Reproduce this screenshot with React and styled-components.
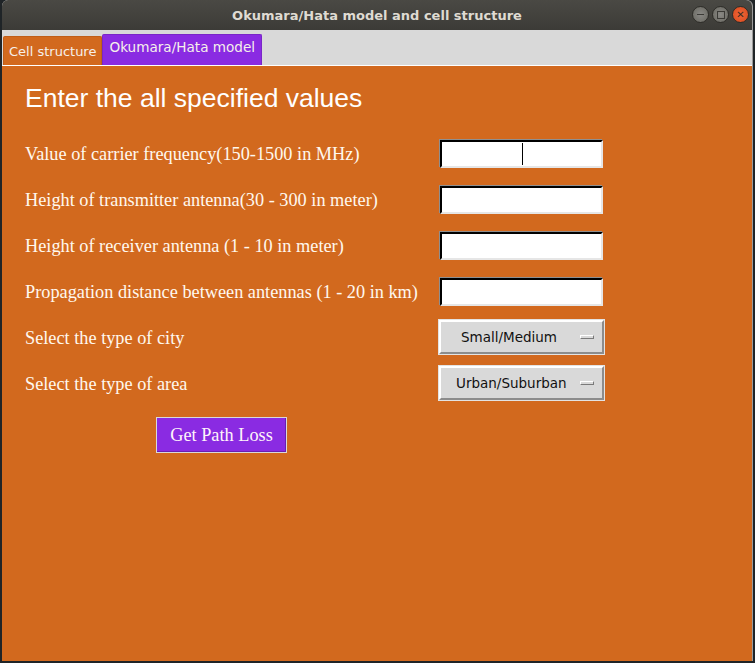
import React from "react";
import styled, { createGlobalStyle } from "styled-components";

const GlobalStyle = createGlobalStyle`
  html, body {
    margin: 0;
    padding: 0;
    background: #2b2b2b;
    overflow: hidden;
  }
`;

const Desktop = styled.div`
  width: 755px;
  height: 663px;
  background: #1f2427;
  display: flex;
  padding-left: 2px;
  box-sizing: border-box;
`;

const Window = styled.div`
  width: 750px;
  height: 661px;
  display: flex;
  flex-direction: column;
  background: #d9d9d9;
  border-radius: 6px 6px 0 0;
  overflow: hidden;
  box-shadow: 1px 0 0 #9a9a9a;
`;

const TitleBar = styled.div`
  height: 30px;
  flex-shrink: 0;
  background: linear-gradient(#4a4944, #3c3b37);
  display: flex;
  align-items: center;
  justify-content: center;
  position: relative;
  font-family: "DejaVu Sans", "Noto Sans", sans-serif;
  font-weight: bold;
  font-size: 13px;
  color: #dfdbd2;
`;

const Controls = styled.div`
  position: absolute;
  right: 3px;
  top: 6px;
  display: flex;
  gap: 3px;
`;

const Ctrl = styled.div`
  width: 17px;
  height: 17px;
  border-radius: 50%;
  background: ${(p) => (p.close ? "radial-gradient(#f0683a, #d9481c)" : "radial-gradient(#8a8985, #67665f)")};
  border: 1px solid #2e2d29;
  box-sizing: border-box;
  display: flex;
  align-items: center;
  justify-content: center;
  color: #3a2a20;
  font-family: "DejaVu Sans", sans-serif;
  font-size: 10px;
  line-height: 1;
`;

const Dash = styled.div`
  width: 7px;
  height: 1.5px;
  background: #3b3a36;
`;

const Square = styled.div`
  width: 6px;
  height: 6px;
  border: 1px solid #3b3a36;
`;

const TabBar = styled.div`
  height: 35px;
  flex-shrink: 0;
  display: flex;
  align-items: flex-end;
  padding-left: 1px;
  border-bottom: 1px solid #ffffff;
`;

const Tab = styled.div`
  height: ${(p) => (p.active ? "31px" : "29px")};
  padding: 0 ${(p) => (p.active ? "6px" : "5px")};
  background: ${(p) => (p.active ? "#8a2be2" : "#d2691e")};
  border: 1px solid ${(p) => (p.active ? "#7a26c8" : "#c05e18")};
  border-bottom: none;
  border-radius: 2px 2px 0 0;
  display: flex;
  align-items: ${(p) => (p.active ? "flex-start" : "center")};
  padding-top: ${(p) => (p.active ? "4px" : "0")};
  box-sizing: border-box;
  font-family: "DejaVu Sans", "Noto Sans", sans-serif;
  font-size: ${(p) => (p.active ? "13.6px" : "13px")};
  color: #f6f0ea;
  white-space: nowrap;
`;

const Panel = styled.div`
  flex: 1;
  background: #d2691e;
  padding: 17px 0 0 23px;
  display: flex;
  flex-direction: column;
`;

const Heading = styled.h1`
  margin: 0 0 27px 0;
  font-family: "Liberation Sans", Arial, sans-serif;
  font-weight: normal;
  font-size: 26.5px;
  color: #ffffff;
  line-height: 30px;
`;

const Rows = styled.div`
  display: flex;
  flex-direction: column;
  gap: 18px;
`;

const Row = styled.div`
  display: grid;
  grid-template-columns: 415px 165px;
  align-items: center;
  height: 28px;
`;

const Label = styled.div`
  font-family: "Liberation Serif", "Times New Roman", serif;
  font-size: 18.3px;
  color: #fff8ee;
`;

const Entry = styled.div`
  height: 28px;
  width: 163px;
  box-sizing: border-box;
  background: #ffffff;
  border-top: 2px solid #000;
  border-left: 2px solid #000;
  border-right: 2px solid #e6e6e6;
  border-bottom: 2px solid #e6e6e6;
  box-shadow: -1px -1px 0 #8f8f8f;
  position: relative;
`;

const Cursor = styled.div`
  position: absolute;
  left: 80px;
  top: 1px;
  bottom: 1px;
  width: 1px;
  background: #000;
`;

const Menu = styled.div`
  height: 34px;
  width: 165px;
  margin: -4px 0 -2px -1px;
  box-sizing: border-box;
  background: #d9d9d9;
  border: 2px solid;
  border-color: #ffffff #8c8c8c #8c8c8c #ffffff;
  box-shadow: 0 0 0 1px #e3e3e3;
  display: flex;
  align-items: center;
  justify-content: space-between;
  padding: 0 8px 0 ${(p) => p.indent}px;
  font-family: "DejaVu Sans", "Noto Sans", sans-serif;
  font-size: 13.5px;
  color: #111;
`;

const Indicator = styled.div`
  width: 14px;
  height: 4px;
  box-sizing: border-box;
  background: #d9d9d9;
  border: 1px solid;
  border-color: #ffffff #7a7a7a #7a7a7a #ffffff;
`;

const ButtonRow = styled.div`
  padding: 19px 0 0 131px;
`;

const Button = styled.button`
  width: 131px;
  height: 36px;
  background: #8a2be2;
  border: 1px solid #d9d9d9;
  box-shadow: inset -1px -1px 0 #6a1fb0;
  font-family: "Liberation Serif", "Times New Roman", serif;
  font-size: 18.3px;
  color: #fff4fa;
  padding: 0;
`;

const labels = [
  "Value of carrier frequency(150-1500 in MHz)",
  "Height of transmitter antenna(30 - 300 in meter)",
  "Height of receiver antenna (1 - 10 in meter)",
  "Propagation distance between antennas (1 - 20 in km)",
];

export default function App() {
  return (
    <>
      <GlobalStyle />
      <Desktop>
        <Window>
          <TitleBar>
            Okumara/Hata model and cell structure
            <Controls>
              <Ctrl><Dash /></Ctrl>
              <Ctrl><Square /></Ctrl>
              <Ctrl close>✕</Ctrl>
            </Controls>
          </TitleBar>
          <TabBar>
            <Tab>Cell structure</Tab>
            <Tab active>Okumara/Hata model</Tab>
          </TabBar>
          <Panel>
            <Heading>Enter the all specified values</Heading>
            <Rows>
              {labels.map((l, i) => (
                <Row key={l}>
                  <Label>{l}</Label>
                  <Entry>{i === 0 && <Cursor />}</Entry>
                </Row>
              ))}
              <Row>
                <Label>Select the type of city</Label>
                <Menu indent={20}>
                  Small/Medium
                  <Indicator />
                </Menu>
              </Row>
              <Row>
                <Label>Select the type of area</Label>
                <Menu indent={15}>
                  Urban/Suburban
                  <Indicator />
                </Menu>
              </Row>
            </Rows>
            <ButtonRow>
              <Button>Get Path Loss</Button>
            </ButtonRow>
          </Panel>
        </Window>
      </Desktop>
    </>
  );
}
